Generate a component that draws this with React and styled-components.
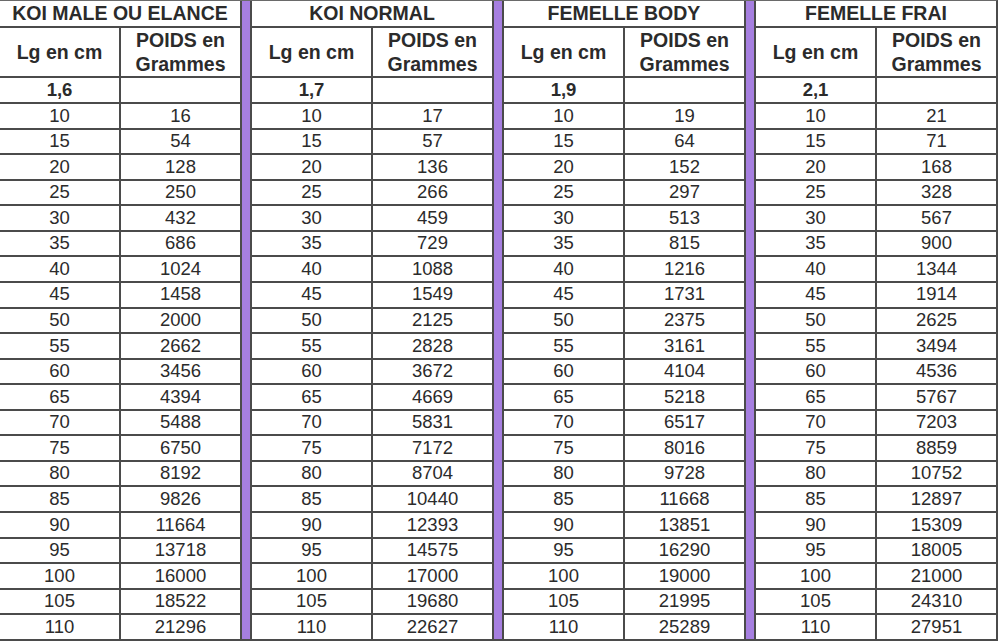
import React from 'react';
import styled, { createGlobalStyle } from 'styled-components';

const GlobalStyle = createGlobalStyle`
  html, body {
    margin: 0;
    padding: 0;
    background: #ffffff;
  }
  body {
    font-family: 'Liberation Sans', Arial, sans-serif;
  }
`;

const Table = styled.div`
  display: grid;
  width: max-content;
  grid-template-columns:
    119px 119px 8px 119px 119px 8px 119px 119px 8px 119px 119px;
  grid-template-rows: 25px 48px 24px repeat(21, 23.57px);
  gap: 2px;
  background-color: #4b4b4b;
  border-top: 1px solid #6a6a6a;
  border-right: 2px solid #4b4b4b;
  border-bottom: 2px solid #4b4b4b;
  color: #2b2b2b;
`;

const Bar = styled.div`
  grid-row: 1 / -1;
  grid-column: ${(p) => p.col};
  background-color: #a67fe0;
`;

const Cell = styled.div`
  background-color: #ffffff;
  display: flex;
  align-items: center;
  justify-content: center;
  text-align: center;
  font-size: 18.5px;
  line-height: 1;
  white-space: nowrap;
`;

const TitleCell = styled(Cell)`
  grid-column: span 2;
  font-size: 19.5px;
  font-weight: bold;
`;

const HeadCell = styled(Cell)`
  font-size: 19.5px;
  font-weight: bold;
  line-height: 24px;
  white-space: normal;
`;

const CoefCell = styled(Cell)`
  font-weight: bold;
`;

const lengths = [
  10, 15, 20, 25, 30, 35, 40, 45, 50, 55, 60, 65, 70, 75, 80, 85, 90, 95, 100,
  105, 110,
];

const groups = [
  {
    title: 'KOI MALE OU ELANCE',
    coef: '1,6',
    weights: [
      16, 54, 128, 250, 432, 686, 1024, 1458, 2000, 2662, 3456, 4394, 5488,
      6750, 8192, 9826, 11664, 13718, 16000, 18522, 21296,
    ],
  },
  {
    title: 'KOI NORMAL',
    coef: '1,7',
    weights: [
      17, 57, 136, 266, 459, 729, 1088, 1549, 2125, 2828, 3672, 4669, 5831,
      7172, 8704, 10440, 12393, 14575, 17000, 19680, 22627,
    ],
  },
  {
    title: 'FEMELLE BODY',
    coef: '1,9',
    weights: [
      19, 64, 152, 297, 513, 815, 1216, 1731, 2375, 3161, 4104, 5218, 6517,
      8016, 9728, 11668, 13851, 16290, 19000, 21995, 25289,
    ],
  },
  {
    title: 'FEMELLE FRAI',
    coef: '2,1',
    weights: [
      21, 71, 168, 328, 567, 900, 1344, 1914, 2625, 3494, 4536, 5767, 7203,
      8859, 10752, 12897, 15309, 18005, 21000, 24310, 27951,
    ],
  },
];

const App = () => {
  return (
    <>
      <GlobalStyle />
      <Table>
        <Bar col={3} />
        <Bar col={6} />
        <Bar col={9} />

        {groups.map((g) => (
          <TitleCell key={'t' + g.title}>{g.title}</TitleCell>
        ))}

        {groups.map((g) => (
          <React.Fragment key={'h' + g.title}>
            <HeadCell>Lg en cm</HeadCell>
            <HeadCell>
              POIDS en
              <br />
              Grammes
            </HeadCell>
          </React.Fragment>
        ))}

        {groups.map((g) => (
          <React.Fragment key={'c' + g.title}>
            <CoefCell>{g.coef}</CoefCell>
            <Cell />
          </React.Fragment>
        ))}

        {lengths.map((len, i) =>
          groups.map((g) => (
            <React.Fragment key={g.title + len}>
              <Cell>{len}</Cell>
              <Cell>{g.weights[i]}</Cell>
            </React.Fragment>
          ))
        )}
      </Table>
    </>
  );
};

export default App;
